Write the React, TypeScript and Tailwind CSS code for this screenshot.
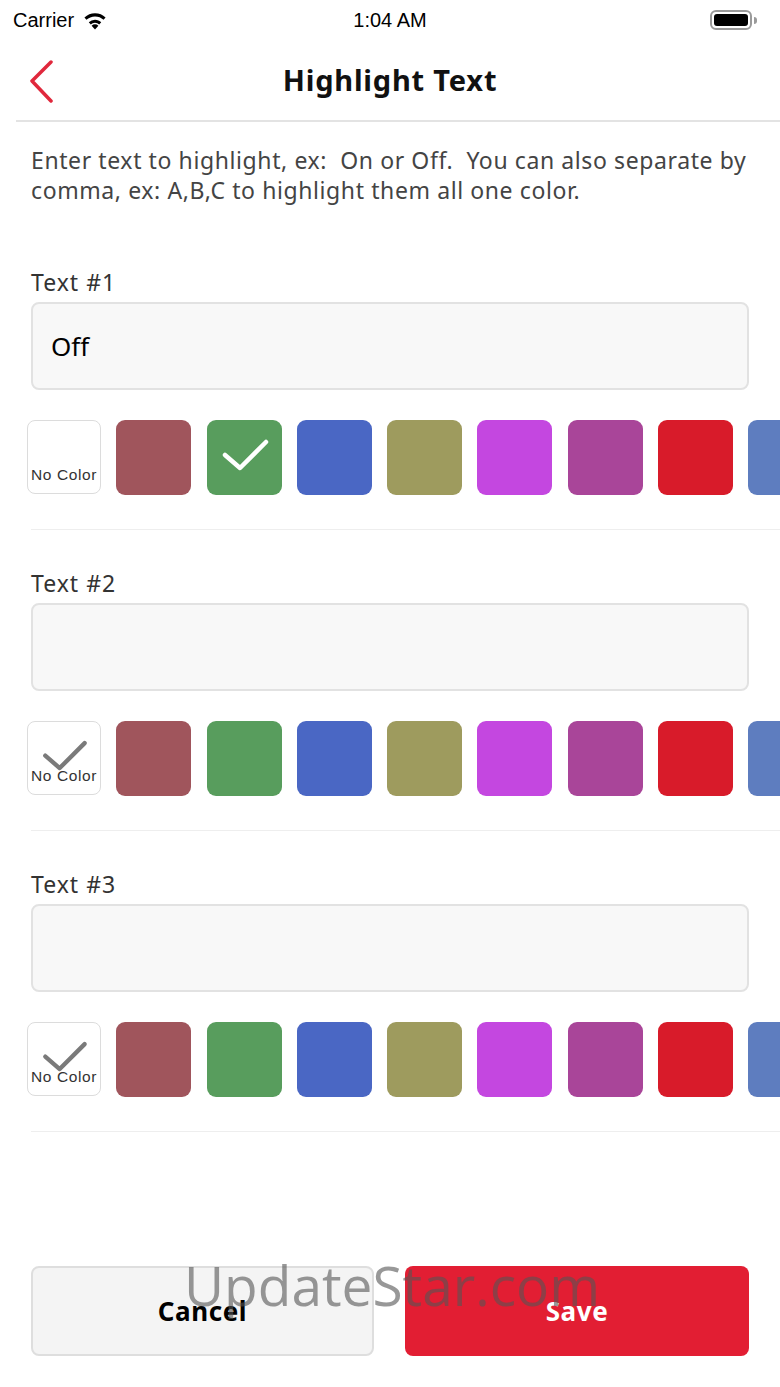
import React from 'react';

// ---------------------------------------------------------------------------
// Swatch palette
// ---------------------------------------------------------------------------

const COLORS = [
  '#a0555c',
  '#589d5d',
  '#4a67c4',
  '#9e9b5e',
  '#c447e0',
  '#a94599',
  '#d81b2a',
  '#5e7dbf',
];

const SECTIONS = [
  { label: 'Text #1', value: 'Off', selected: 1 },
  { label: 'Text #2', value: '', selected: -1 },
  { label: 'Text #3', value: '', selected: -1 },
];

const FONT = { fontFamily: '"Noto Sans", Lato, sans-serif' };

function Check({ color }: { color: string }) {
  return (
    <svg viewBox="0 0 75 75" className="absolute inset-0 h-full w-full">
      <polyline
        points="18,35 33,48 59,22"
        fill="none"
        stroke={color}
        strokeWidth="4.5"
        strokeLinecap="round"
        strokeLinejoin="round"
      />
    </svg>
  );
}

function StatusBar() {
  return (
    <div className="relative flex h-10 items-center px-[13px] text-[20px] text-black" style={{ fontFamily: '"Liberation Sans", sans-serif' }}>
      <span>Carrier</span>
      <svg viewBox="0 0 24 18" className="ml-2 h-[19px] w-[26px]">
        <path d="M12 17.5l-3.2-3.6a4.6 4.6 0 0 1 6.4 0z" fill="#000" />
        <path d="M12 8.2c2.3 0 4.4.9 5.9 2.4l-1.9 2.1a5.6 5.6 0 0 0-8 0l-1.9-2.1A8.4 8.4 0 0 1 12 8.2z" fill="#000" />
        <path d="M12 2.2c3.9 0 7.4 1.5 10 4l-1.9 2.1A11.8 11.8 0 0 0 12 5.1c-3.1 0-6 1.2-8.1 3.2L2 6.2a14.6 14.6 0 0 1 10-4z" fill="#000" />
      </svg>
      <span className="absolute left-1/2 -translate-x-1/2 font-medium">1:04 AM</span>
      <div className="ml-auto mr-[10px] flex items-center">
        <div className="flex h-[20px] w-[42px] items-center rounded-[6px] border-2 border-[#9a9a9a] p-[2px]">
          <div className="h-full w-full rounded-[3px] bg-black" />
        </div>
        <div className="ml-[2px] h-[7px] w-[3px] rounded-r-sm bg-[#9a9a9a]" />
      </div>
    </div>
  );
}

function Swatches({ selected }: { selected: number }) {
  return (
    <div className="mt-[30px] flex gap-[15.3px] overflow-hidden pl-[27px]">
      <div className="relative flex h-[74px] w-[74px] shrink-0 items-end justify-center rounded-[8px] border border-[#dcdcdc] bg-white pb-[7px]">
        {selected === -1 && <Check color="#7a7a7a" />}
        <span
          className="relative text-[15.5px] tracking-[0.6px] text-[#333]"
          style={{ fontFamily: '"Liberation Sans", sans-serif' }}
        >
          No Color
        </span>
      </div>
      {COLORS.map((c, i) => (
        <div
          key={c}
          className="relative h-[75px] w-[75px] shrink-0 rounded-[9px]"
          style={{ backgroundColor: c }}
        >
          {selected === i && <Check color="#ffffff" />}
        </div>
      ))}
    </div>
  );
}

export default function App() {
  return (
    <div className="relative flex h-[1387px] w-[780px] flex-col overflow-hidden bg-white" style={FONT}>
      <StatusBar />

      {/* Nav bar */}
      <div className="relative flex h-20 items-center justify-center">
        <svg viewBox="0 0 30 44" className="absolute left-[26px] top-[20px] h-[44px] w-[30px]">
          <polyline
            points="25,2 6,21 25,41"
            fill="none"
            stroke="#e0283c"
            strokeWidth="3.5"
            strokeLinecap="round"
            strokeLinejoin="round"
          />
        </svg>
        <h1 className="text-[29px] font-bold tracking-[0.8px] text-[#111]">Highlight Text</h1>
      </div>
      <div className="ml-4 h-[2px] bg-[#e3e3e3]" />

      <p className="mt-[23px] px-[31px] text-[23px] leading-[30px] tracking-[0.6px] text-[#444]">
        Enter text to highlight, ex:&nbsp; On or Off.&nbsp; You can also separate by comma, ex: A,B,C to highlight them all one color.
      </p>

      <div className="mt-[64px]">
        {SECTIONS.map((s, idx) => (
          <div key={s.label} className={idx > 0 ? 'mt-[40px]' : ''}>
            <div className="px-[31px] text-[23px] leading-[26px] tracking-[1px] text-[#333]">{s.label}</div>
            <div className="mx-[31px] mt-[7px] flex h-[88px] items-center rounded-[8px] border-2 border-[#e2e2e2] bg-[#f8f8f8] px-[18px] text-[26px] text-black">
              {s.value}
            </div>
            <Swatches selected={s.selected} />
            <div className="ml-[31px] mt-[34px] h-px bg-[#eeeeee]" />
          </div>
        ))}
      </div>

      {/* Buttons */}
      <div className="mt-auto flex gap-[31px] px-[31px] pb-[31px]">
        <button className="flex h-[90px] w-[343px] items-center justify-center rounded-[8px] border-2 border-[#dedede] bg-[#f4f4f4] text-[26px] font-bold tracking-[0.6px] text-black">
          Cancel
        </button>
        <button className="flex h-[90px] flex-1 items-center justify-center rounded-[8px] bg-[#e21e33] text-[26px] font-bold tracking-[0.6px] text-white">
          Save
        </button>
      </div>

      {/* Watermark */}
      <div
        className="pointer-events-none absolute left-[184px] top-[1250px] text-[55px] leading-[70px] text-[#555] opacity-60"
        style={{ fontFamily: '"Open Sans", sans-serif' }}
      >
        UpdateStar.com
      </div>
    </div>
  );
}
